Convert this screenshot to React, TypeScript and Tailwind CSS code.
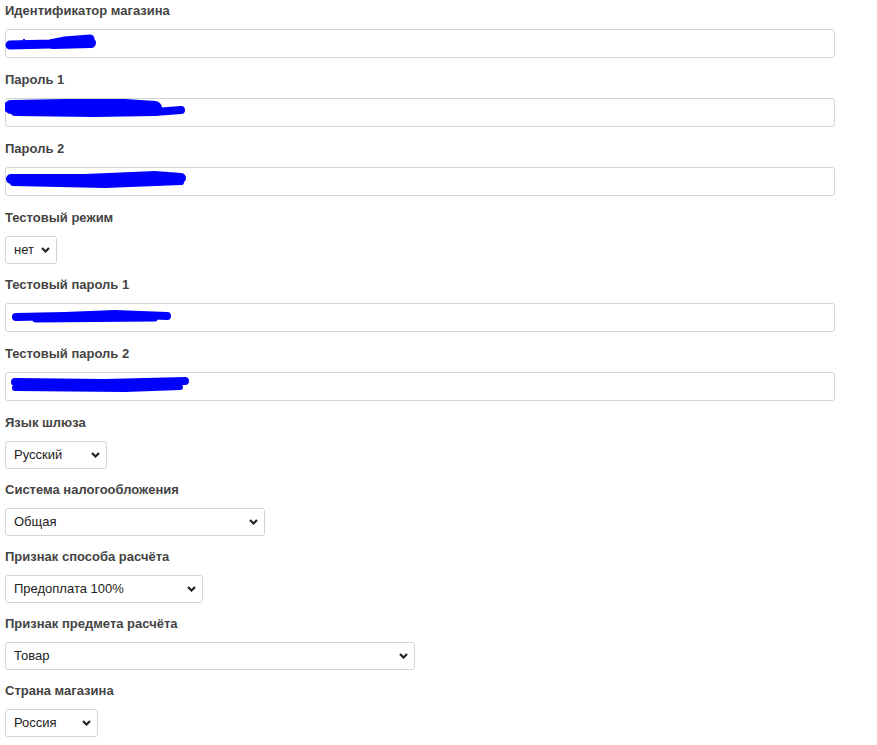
import React from "react";

// blue marker blots that hide the secret values, coords relative to the input box
const scribbles: Record<string, React.ReactNode> = {
  shop: (
    <>
      <path d="M5 16 L45 15 L60 12 L85 10" stroke="#0000ff" strokeWidth="9" strokeLinecap="round" fill="none" />
      <path d="M48 15 L86 14" stroke="#0000ff" strokeWidth="10" strokeLinecap="round" fill="none" />
      <path d="M19 10 L19 13" stroke="#0000ff" strokeWidth="2" fill="none" />
    </>
  ),
  pass1: (
    <>
      <path d="M6 9 L60 8 L120 8 L150 10" stroke="#0000ff" strokeWidth="14" strokeLinecap="round" fill="none" />
      <path d="M10 14 L90 15 L150 14 L176 12" stroke="#0000ff" strokeWidth="8" strokeLinecap="round" fill="none" />
    </>
  ),
  pass2: (
    <>
      <path d="M6 12 L80 12 L150 9 L176 11" stroke="#0000ff" strokeWidth="10" strokeLinecap="round" fill="none" />
      <path d="M8 16 L100 18 L176 15" stroke="#0000ff" strokeWidth="6" strokeLinecap="round" fill="none" />
    </>
  ),
  test1: (
    <>
      <path d="M11 14 L60 13 L110 11 L162 13" stroke="#0000ff" strokeWidth="8" strokeLinecap="round" fill="none" />
      <path d="M30 17 L150 16" stroke="#0000ff" strokeWidth="5" strokeLinecap="round" fill="none" />
    </>
  ),
  test2: (
    <>
      <path d="M10 10 L100 11 L180 9" stroke="#0000ff" strokeWidth="8" strokeLinecap="round" fill="none" />
      <path d="M10 16 L120 17 L175 15" stroke="#0000ff" strokeWidth="6" strokeLinecap="round" fill="none" />
    </>
  ),
};

function Label({ children }: { children: React.ReactNode }) {
  return <div className="text-[13px] leading-[18px] font-bold text-[#444] mb-[9px]">{children}</div>;
}

function TextField({ label, blot }: { label: string; blot: string }) {
  return (
    <div className="mb-[13px]">
      <Label>{label}</Label>
      <div className="relative w-[830px] h-[29px]">
        <input
          type="text"
          readOnly
          className="w-full h-full border border-[#d4d4d4] rounded-[3px] bg-white px-[8px] text-[13px] text-[#333] outline-none"
        />
        <svg className="absolute left-0 top-0 pointer-events-none" width="200" height="29" viewBox="0 0 200 29">
          {scribbles[blot]}
        </svg>
      </div>
    </div>
  );
}

function SelectField({ label, value, width }: { label: string; value: string; width: string }) {
  return (
    <div className="mb-[12px]">
      <Label>{label}</Label>
      <div className={`relative h-[28px] ${width}`}>
        <select
          defaultValue={value}
          className="appearance-none w-full h-full border border-[#d4d4d4] rounded-[3px] bg-white pl-[8px] pr-[22px] text-[13px] text-[#222] outline-none"
        >
          <option>{value}</option>
        </select>
        <svg
          className="absolute right-[7px] top-[11px] pointer-events-none"
          width="9"
          height="6"
          viewBox="0 0 9 6"
        >
          <path d="M1 1 L4.5 4.5 L8 1" stroke="#222" strokeWidth="2.2" fill="none" />
        </svg>
      </div>
    </div>
  );
}

export default function App() {
  return (
    <div className="min-h-screen bg-white pl-[5px] pt-[2px]" style={{ fontFamily: '"Liberation Sans", Arial, sans-serif' }}>
      <TextField label="Идентификатор магазина" blot="shop" />
      <TextField label="Пароль 1" blot="pass1" />
      <TextField label="Пароль 2" blot="pass2" />
      <SelectField label="Тестовый режим" value="нет" width="w-[52px]" />
      <TextField label="Тестовый пароль 1" blot="test1" />
      <TextField label="Тестовый пароль 2" blot="test2" />
      <SelectField label="Язык шлюза" value="Русский" width="w-[102px]" />
      <SelectField label="Система налогообложения" value="Общая" width="w-[260px]" />
      <SelectField label="Признак способа расчёта" value="Предоплата 100%" width="w-[198px]" />
      <SelectField label="Признак предмета расчёта" value="Товар" width="w-[410px]" />
      <SelectField label="Страна магазина" value="Россия" width="w-[93px]" />
    </div>
  );
}
